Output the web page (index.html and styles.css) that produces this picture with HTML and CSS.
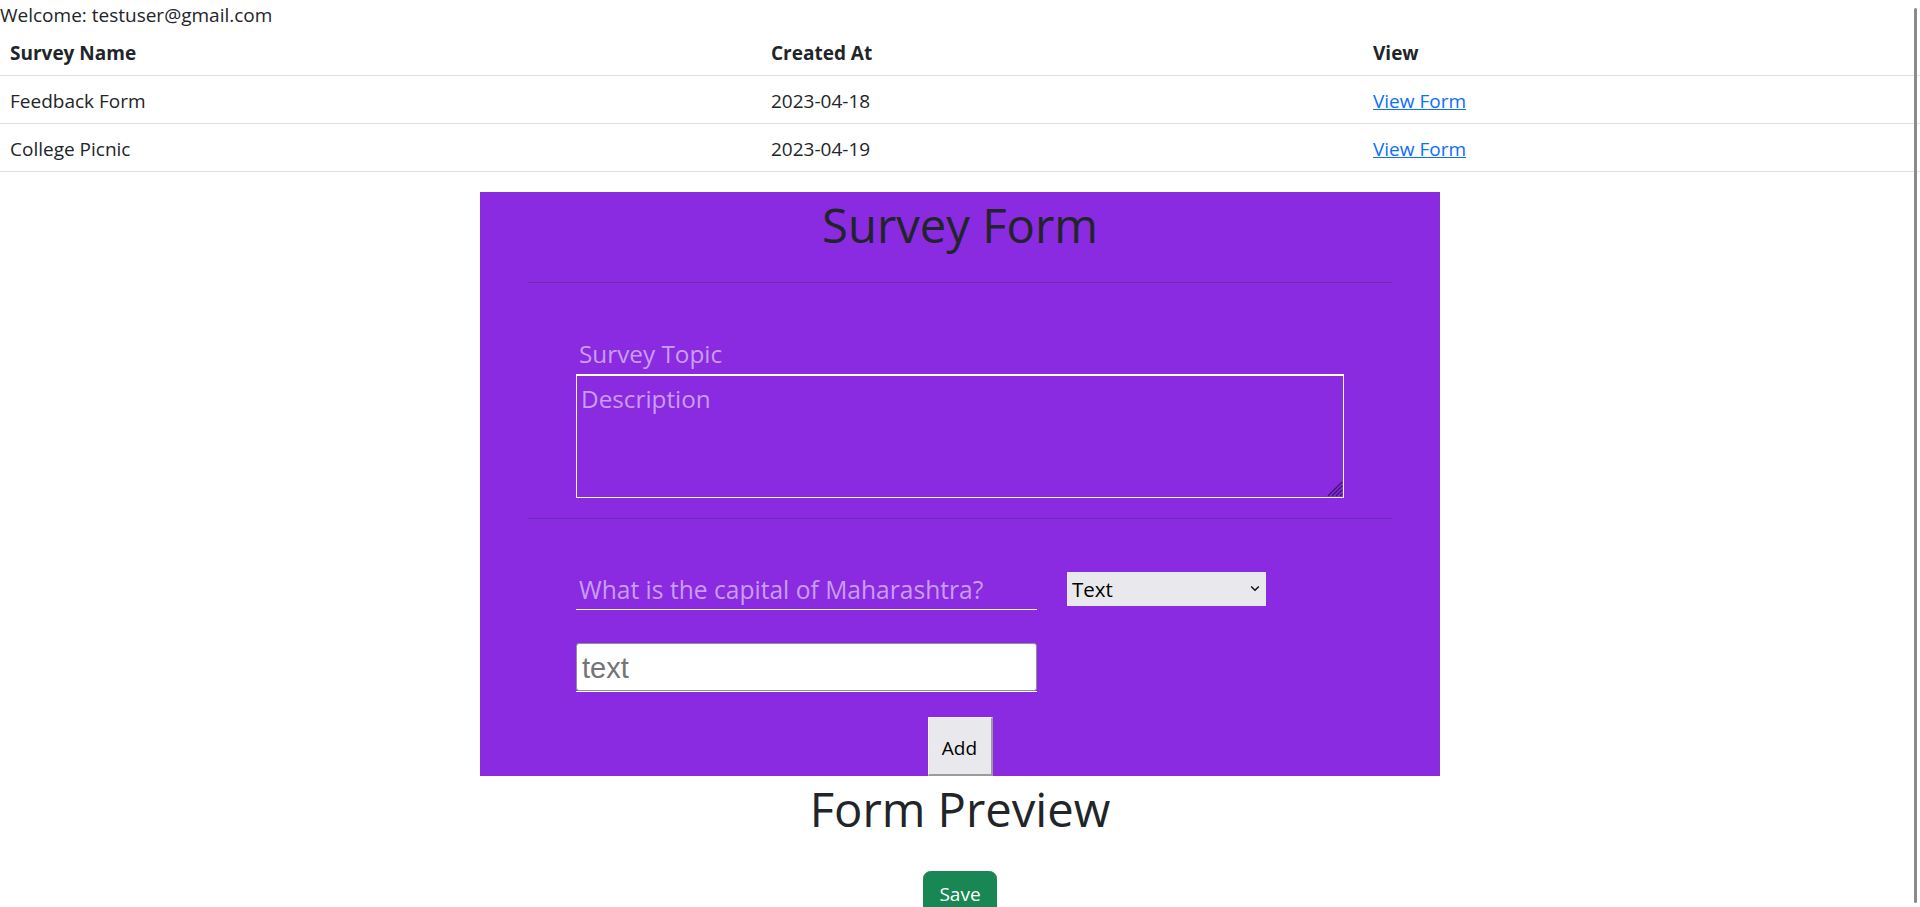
FILE: index.html
```html
<!DOCTYPE html>
<html lang="en">
<head>
<meta charset="utf-8">
<title>Surveys</title>
<link rel="stylesheet" href="styles.css">
</head>
<body>
<div class="welcome">Welcome: testuser@gmail.com</div>
<table class="surveys">
  <colgroup>
    <col class="col-name">
    <col class="col-date">
    <col class="col-view">
  </colgroup>
  <thead>
    <tr><th>Survey Name</th><th>Created At</th><th>View</th></tr>
  </thead>
  <tbody>
    <tr><td>Feedback Form</td><td>2023-04-18</td><td><a href="#">View Form</a></td></tr>
    <tr><td>College Picnic</td><td>2023-04-19</td><td><a href="#">View Form</a></td></tr>
  </tbody>
</table>

<div class="survey-box">
  <h1 class="title">Survey Form</h1>
  <hr class="divider divider-top">
  <div class="topic-block">
    <input class="topic" type="text" placeholder="Survey Topic">
    <div class="desc-wrap">
      <textarea class="desc" placeholder="Description"></textarea>
      <svg class="grip" width="18" height="18" viewBox="0 0 18 18" aria-hidden="true"><path d="M3 17L17 3M7 17L17 7M11 17L17 11M15 17L17 15" stroke="#3e1270" stroke-width="1.3" fill="none"/></svg>
    </div>
  </div>
  <hr class="divider divider-mid">
  <div class="question-block">
    <div class="q-row">
      <input class="question" type="text" placeholder="What is the capital of Maharashtra?">
      <div class="select-wrap">
        <select class="qtype"><option>Text</option><option>Radio</option><option>Checkbox</option></select>
        <svg class="chev" width="10" height="7" viewBox="0 0 10 7" aria-hidden="true"><path d="M1.2 1.5l3.8 3.8 3.8-3.8" fill="none" stroke="#111" stroke-width="1.5"/></svg>
      </div>
    </div>
    <div class="answer-wrap"><input class="answer" type="text" placeholder="text"></div>
  </div>
  <div class="add-row"><button class="add" type="button">Add</button></div>
</div>

<h1 class="preview">Form Preview</h1>
<div class="save-row"><button class="save" type="button">Save</button></div>

<div class="scroll-thumb"></div>
</body>
</html>
```

FILE: styles.css
```css
html {
  overflow: hidden;
  scrollbar-width: none;
}
body {
  margin: 0;
  font-family: "Open Sans", "Noto Sans", sans-serif;
  font-size: 19px;
  color: #212529;
  background: #fff;
}

.welcome {
  height: 30px;
  line-height: 30px;
}

/* table */
.surveys {
  width: 100%;
  border-collapse: separate;
  border-spacing: 0;
  table-layout: fixed;
}
.col-name { width: 761px; }
.col-date { width: 602px; }
.col-view { width: 557px; }
.surveys th,
.surveys td {
  padding: 0 10px;
  text-align: left;
  border-bottom: 1px solid #dee2e6;
  white-space: nowrap;
}
.surveys th {
  font-weight: 700;
  padding-top: 2px;
  line-height: 43px;
}
.surveys td {
  padding-top: 4px;
  line-height: 43px;
}
.surveys a {
  color: #0d6efd;
  text-decoration: underline;
}

/* purple form */
.survey-box {
  width: 960px;
  margin: 20px auto 0;
  background: #8a2be2;
}
.title {
  margin: 0;
  padding-top: 3px;
  font-size: 47.2px;
  font-weight: 400;
  line-height: 60px;
  text-align: center;
  color: #212529;
}
.divider {
  margin: 0 48px;
  height: 0;
  border: 0;
  border-top: 1px solid #702ab2;
}
.divider-top { margin-top: 27px; }
.divider-mid { margin-top: 20px; }

.topic-block {
  margin: 53px 96px 0;
}
.topic {
  display: block;
  box-sizing: border-box;
  width: 100%;
  height: 36px;
  padding: 0 3px;
  border: 0;
  background: transparent;
  font-family: "Open Sans", sans-serif;
  font-size: 24.3px;
  line-height: 36px;
  color: #fff;
  outline: none;
}
.desc-wrap {
  position: relative;
  margin-top: 2px;
}
.desc {
  display: block;
  box-sizing: border-box;
  width: 100%;
  height: 124px;
  padding: 5px 4px;
  border: 1px solid #fff;
  border-top-width: 2px;
  background: transparent;
  font-family: "Open Sans", sans-serif;
  font-size: 24.3px;
  line-height: 36px;
  color: #fff;
  resize: none;
  outline: none;
}
.grip {
  position: absolute;
  right: 1px;
  bottom: 1px;
}
.topic::placeholder,
.desc::placeholder,
.question::placeholder {
  color: #c99df2;
  opacity: 1;
}

.question-block {
  margin: 51px 96px 0;
}
.q-row {
  display: flex;
  align-items: flex-start;
  gap: 30px;
}
.question {
  box-sizing: border-box;
  width: 461px;
  height: 40px;
  padding: 0 3px;
  border: 0;
  border-bottom: 1px solid #fff;
  background: transparent;
  font-family: "Open Sans", sans-serif;
  font-size: 24.6px;
  line-height: 39px;
  color: #fff;
  outline: none;
}
.select-wrap {
  position: relative;
  margin-top: 2px;
}
.qtype {
  display: block;
  box-sizing: border-box;
  width: 199px;
  height: 34px;
  padding: 0 5px;
  border: 0;
  border-radius: 0;
  background: #e9e9ed;
  -webkit-appearance: none;
  appearance: none;
  font-family: "Open Sans", sans-serif;
  font-size: 20.5px;
  color: #000;
  outline: none;
}
.chev {
  position: absolute;
  right: 6px;
  top: 13px;
  pointer-events: none;
}
.answer-wrap {
  width: 461px;
  margin-top: 33px;
  border-bottom: 1px solid #fff;
}
.answer {
  display: block;
  box-sizing: border-box;
  width: 100%;
  height: 48px;
  padding: 2px 5px 0;
  border: 1px solid #8f8f9d;
  border-radius: 3px;
  background: #fff;
  font-family: "Liberation Sans", Arial, sans-serif;
  font-size: 29px;
  color: #000;
  outline: none;
}
.answer::placeholder {
  color: #757575;
  opacity: 1;
}
.add-row {
  margin-top: 25px;
  text-align: center;
  height: 59px;
}
.add {
  box-sizing: border-box;
  width: 65px;
  height: 59px;
  padding: 3px 0 0;
  background: #e9e9ed;
  border-style: solid;
  border-width: 1px 2px 2px 1px;
  border-color: #f4f4f7 #9b9b9b #9b9b9b #f4f4f7;
  border-radius: 0;
  font-family: "Open Sans", sans-serif;
  font-size: 19px;
  color: #000;
  vertical-align: top;
}

.preview {
  margin: 3px 0 0;
  font-size: 47.2px;
  font-weight: 400;
  line-height: 60px;
  text-align: center;
  color: #212529;
}
.save-row {
  margin-top: 32px;
  text-align: center;
}
.save {
  box-sizing: border-box;
  height: 47px;
  padding: 0 15px;
  border: 1px solid #198754;
  border-radius: 7.5px;
  background: #198754;
  color: #fff;
  font-family: "Open Sans", sans-serif;
  font-size: 19px;
  line-height: 45px;
}

.scroll-thumb {
  position: fixed;
  left: 1914px;
  top: 8px;
  width: 3px;
  height: 895px;
  border-radius: 2px;
  background: #8a8a8a;
}
```
